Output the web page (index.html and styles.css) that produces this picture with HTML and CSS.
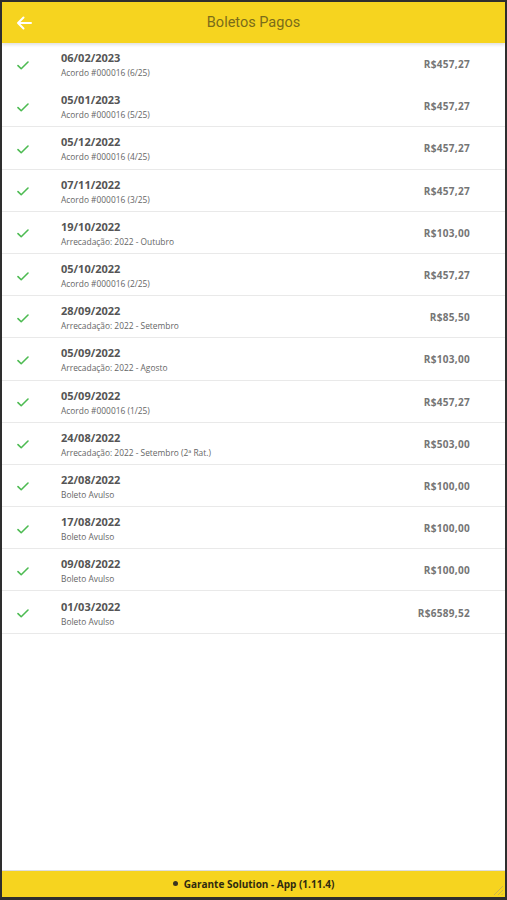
FILE: index.html
```html
<!DOCTYPE html>
<html lang="pt-BR">

<head>
    <meta charset="UTF-8">
    <meta name="viewport" content="width=device-width, initial-scale=1.0">
    <title>Boletos Pagos - Garante Solution</title>
    <link rel="stylesheet" href="styles.css">
</head>

<body>
    <div class="window">
        <header class="appbar">
            <button class="back-button" aria-label="Voltar">
                <svg width="16" height="14" viewBox="0 0 16 14">
                    <path d="M15 7H2M7.5 1.5L2 7l5.5 5.5" fill="none" stroke="#fff" stroke-width="2" stroke-linecap="round" stroke-linejoin="round" />
                </svg>
            </button>
            <h1>Boletos Pagos</h1>
            <span></span>
        </header>

        <!-- lista de boletos -->
        <main class="list">
            <ul class="boletos">
                <li class="boleto">
                    <svg class="check" width="12" height="9" viewBox="0 0 12 9"><path d="M1 4.6l3.2 3.1L11 1" /></svg>
                    <div class="info">
                        <div class="date">06/02/2023</div>
                        <div class="desc">Acordo #000016 (6/25)</div>
                    </div>
                    <div class="amount">R$457,27</div>
                </li>
                <li class="boleto">
                    <svg class="check" width="12" height="9" viewBox="0 0 12 9"><path d="M1 4.6l3.2 3.1L11 1" /></svg>
                    <div class="info">
                        <div class="date">05/01/2023</div>
                        <div class="desc">Acordo #000016 (5/25)</div>
                    </div>
                    <div class="amount">R$457,27</div>
                </li>
                <li class="boleto">
                    <svg class="check" width="12" height="9" viewBox="0 0 12 9"><path d="M1 4.6l3.2 3.1L11 1" /></svg>
                    <div class="info">
                        <div class="date">05/12/2022</div>
                        <div class="desc">Acordo #000016 (4/25)</div>
                    </div>
                    <div class="amount">R$457,27</div>
                </li>
                <li class="boleto">
                    <svg class="check" width="12" height="9" viewBox="0 0 12 9"><path d="M1 4.6l3.2 3.1L11 1" /></svg>
                    <div class="info">
                        <div class="date">07/11/2022</div>
                        <div class="desc">Acordo #000016 (3/25)</div>
                    </div>
                    <div class="amount">R$457,27</div>
                </li>
                <li class="boleto">
                    <svg class="check" width="12" height="9" viewBox="0 0 12 9"><path d="M1 4.6l3.2 3.1L11 1" /></svg>
                    <div class="info">
                        <div class="date">19/10/2022</div>
                        <div class="desc">Arrecadação: 2022 - Outubro</div>
                    </div>
                    <div class="amount">R$103,00</div>
                </li>
                <li class="boleto">
                    <svg class="check" width="12" height="9" viewBox="0 0 12 9"><path d="M1 4.6l3.2 3.1L11 1" /></svg>
                    <div class="info">
                        <div class="date">05/10/2022</div>
                        <div class="desc">Acordo #000016 (2/25)</div>
                    </div>
                    <div class="amount">R$457,27</div>
                </li>
                <li class="boleto">
                    <svg class="check" width="12" height="9" viewBox="0 0 12 9"><path d="M1 4.6l3.2 3.1L11 1" /></svg>
                    <div class="info">
                        <div class="date">28/09/2022</div>
                        <div class="desc">Arrecadação: 2022 - Setembro</div>
                    </div>
                    <div class="amount">R$85,50</div>
                </li>
                <li class="boleto">
                    <svg class="check" width="12" height="9" viewBox="0 0 12 9"><path d="M1 4.6l3.2 3.1L11 1" /></svg>
                    <div class="info">
                        <div class="date">05/09/2022</div>
                        <div class="desc">Arrecadação: 2022 - Agosto</div>
                    </div>
                    <div class="amount">R$103,00</div>
                </li>
                <li class="boleto">
                    <svg class="check" width="12" height="9" viewBox="0 0 12 9"><path d="M1 4.6l3.2 3.1L11 1" /></svg>
                    <div class="info">
                        <div class="date">05/09/2022</div>
                        <div class="desc">Acordo #000016 (1/25)</div>
                    </div>
                    <div class="amount">R$457,27</div>
                </li>
                <li class="boleto">
                    <svg class="check" width="12" height="9" viewBox="0 0 12 9"><path d="M1 4.6l3.2 3.1L11 1" /></svg>
                    <div class="info">
                        <div class="date">24/08/2022</div>
                        <div class="desc">Arrecadação: 2022 - Setembro (2ª Rat.)</div>
                    </div>
                    <div class="amount">R$503,00</div>
                </li>
                <li class="boleto">
                    <svg class="check" width="12" height="9" viewBox="0 0 12 9"><path d="M1 4.6l3.2 3.1L11 1" /></svg>
                    <div class="info">
                        <div class="date">22/08/2022</div>
                        <div class="desc">Boleto Avulso</div>
                    </div>
                    <div class="amount">R$100,00</div>
                </li>
                <li class="boleto">
                    <svg class="check" width="12" height="9" viewBox="0 0 12 9"><path d="M1 4.6l3.2 3.1L11 1" /></svg>
                    <div class="info">
                        <div class="date">17/08/2022</div>
                        <div class="desc">Boleto Avulso</div>
                    </div>
                    <div class="amount">R$100,00</div>
                </li>
                <li class="boleto">
                    <svg class="check" width="12" height="9" viewBox="0 0 12 9"><path d="M1 4.6l3.2 3.1L11 1" /></svg>
                    <div class="info">
                        <div class="date">09/08/2022</div>
                        <div class="desc">Boleto Avulso</div>
                    </div>
                    <div class="amount">R$100,00</div>
                </li>
                <li class="boleto">
                    <svg class="check" width="12" height="9" viewBox="0 0 12 9"><path d="M1 4.6l3.2 3.1L11 1" /></svg>
                    <div class="info">
                        <div class="date">01/03/2022</div>
                        <div class="desc">Boleto Avulso</div>
                    </div>
                    <div class="amount">R$6589,52</div>
                </li>
            </ul>
        </main>

        <footer class="statusbar">
            <span class="dot"></span>
            <span>Garante Solution - App (1.11.4)</span>
            <svg class="grip" width="13" height="13" viewBox="0 0 13 13">
                <path d="M12 3L3 12M12 7L7 12M12 10.5L10.5 12" stroke="#c9b24a" stroke-width="1" />
            </svg>
        </footer>
    </div>
</body>

</html>
```

FILE: styles.css
```css
/* base */
html, body {
    margin: 0;
    padding: 0;
}

body {
    background-color: #2e2e2e;
    font-family: "Open Sans", Arial, sans-serif;
}

.window {
    margin: 2px 2px 3px 2px;
    height: 895px;
    background-color: #fff;
    display: flex;
    flex-direction: column;
    overflow: hidden;
}

/* barra superior */
.appbar {
    position: relative;
    z-index: 2;
    height: 41px;
    background-color: #f6d41f;
    display: grid;
    grid-template-columns: 50px 1fr 50px;
    align-items: center;
    box-shadow: 0 2px 3px rgba(0, 0, 0, 0.12);
}

.back-button {
    background: none;
    border: none;
    padding: 0 0 0 14px;
    height: 41px;
    display: flex;
    align-items: center;
    cursor: pointer;
}

.appbar h1 {
    margin: 0;
    text-align: center;
    font-family: Roboto, Arial, sans-serif;
    font-size: 14.5px;
    font-weight: 400;
    color: #7a6c1a;
}

/* lista */
.list {
    flex: 1;
}

.boletos {
    list-style: none;
    margin: 0;
    padding: 0;
}

.boleto {
    display: flex;
    align-items: center;
    padding: 7.1px 35px 6.1px 15px;
    border-bottom: 1px solid #e9e9e9;
}

.boleto:first-child {
    border-bottom-color: transparent;
}

.check {
    width: 12px;
    height: 9px;
    margin-top: 2px;
    flex-shrink: 0;
}

.check path {
    fill: none;
    stroke: #4dbb52;
    stroke-width: 1.6;
    stroke-linecap: round;
    stroke-linejoin: round;
}

.info {
    flex: 1;
    margin-left: 32px;
}

.date {
    font-size: 11px;
    line-height: 16px;
    font-weight: 700;
    color: #555;
}

.desc {
    margin-top: 1px;
    font-size: 8.4px;
    line-height: 11px;
    color: #666;
}

.amount {
    font-size: 10px;
    font-weight: 700;
    color: #757575;
    letter-spacing: 0.3px;
}

/* rodapé */
.statusbar {
    position: relative;
    height: 26px;
    background-color: #f6d41f;
    border-top: 1px solid #ddd;
    display: flex;
    justify-content: center;
    align-items: center;
    gap: 6px;
    font-size: 10px;
    font-weight: 700;
    color: #2f2a10;
}

.dot {
    width: 5px;
    height: 5px;
    border-radius: 50%;
    background-color: #3a3520;
    margin-top: -2px;
}

.grip {
    position: absolute;
    right: 1px;
    bottom: 1px;
}
```
